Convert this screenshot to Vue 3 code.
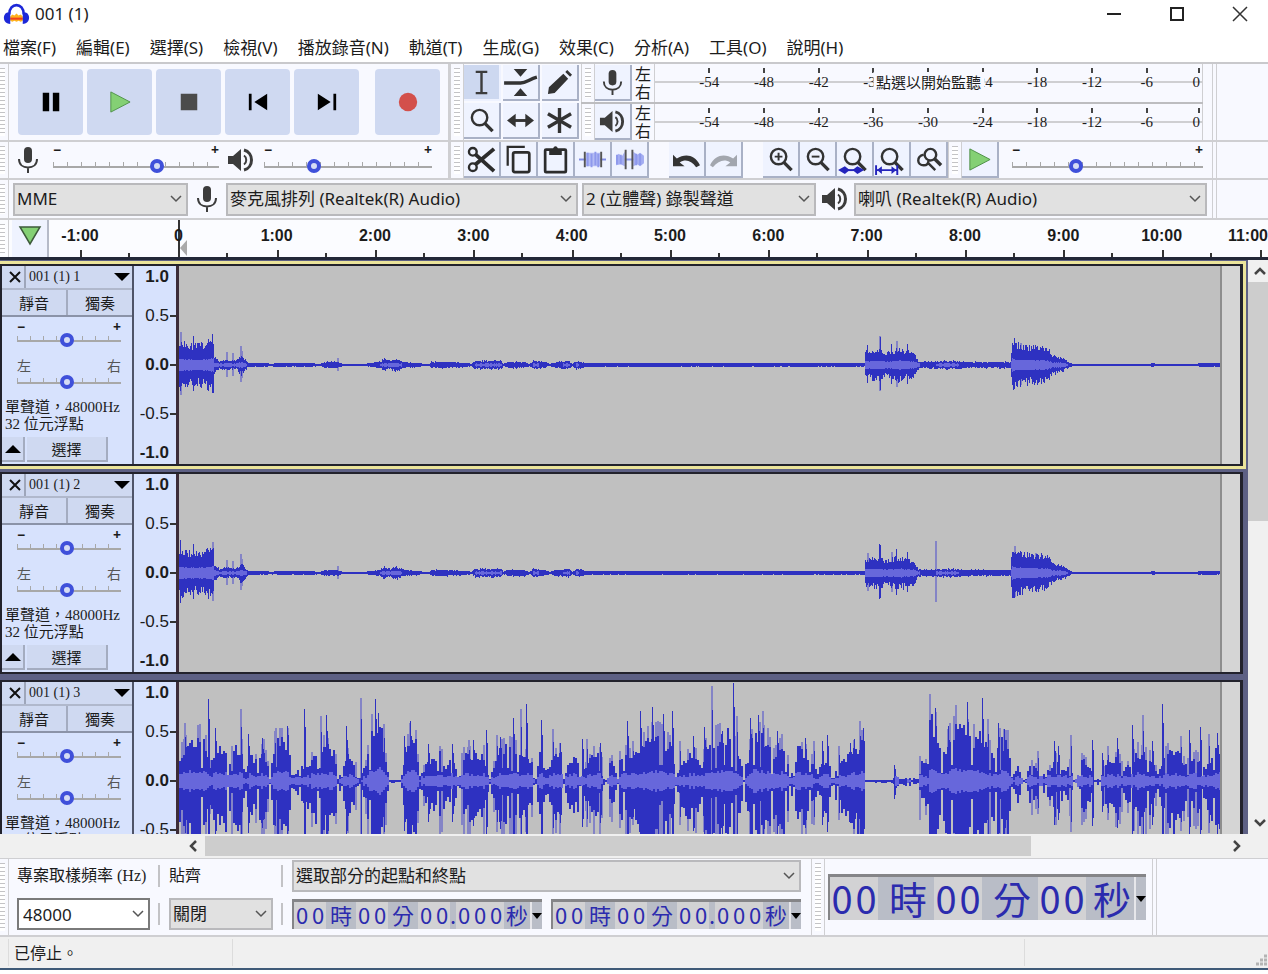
<!-- App.vue -->
<template>
  <div class="app" lang="zh-TW">
    <svg class="defs" aria-hidden="true">
      <symbol id="mic" viewBox="0 0 24 28">
        <rect x="8" y="1" width="8" height="16" rx="4" fill="#3c3c3c" />
        <path d="M3 13c0 5.500 4 8.500 9 8.500s9-3 9-8.500M12 21.500V27" fill="none" stroke="#3c3c3c" stroke-width="2" />
      </symbol>
      <symbol id="speaker" viewBox="0 0 28 26">
        <path d="M1 9h5l8-7v22l-8-7H1z" fill="#3c3c3c" />
        <path d="M17 8.500c3 2 3 7 0 9" fill="none" stroke="#3c3c3c" stroke-width="2" />
        <path d="M17 3c10 2.500 10 17.500 0 20" fill="none" stroke="#3c3c3c" stroke-width="3" />
      </symbol>
      <symbol id="caret" viewBox="0 0 12 8">
        <path d="M1 1l5 5 5-5" fill="none" stroke="#555" stroke-width="1.500" />
      </symbol>
      <symbol id="arrow" viewBox="0 0 12 8">
        <path d="M1 1l5 5 5-5" fill="none" stroke="#444" stroke-width="2.500" />
      </symbol>
      <symbol id="lens" viewBox="0 0 28 28">
        <circle cx="12" cy="11" r="8" fill="none" stroke="#333" stroke-width="2.500" />
        <path d="M17.500 17l8 8" stroke="#333" stroke-width="3.500" />
      </symbol>
    </svg>

    <!-- 標題列 -->
    <header class="titlebar">
      <svg class="logo" viewBox="0 0 24 24">
        <path d="M5 12c0-12 14-12 14 0" fill="none" stroke="#1d28d8" stroke-width="2.500" />
        <path d="M6 14l2-2 2 1 2-2 2 2 2-1 2 2v4l-2 1-2-1-2 1-2-1-2 1-2-1z" fill="#ffb21c" />
        <path d="M6 15h12v2H6z" fill="#f0421c" />
        <path d="M6 10v11c-7 0-8-9-3-11zM18 10v11c7 0 8-9 3-11z" fill="#1d28d8" />
      </svg>
      <span class="title">001 (1)</span>
      <div class="window-buttons">
        <button aria-label="最小化">
          <svg width="16" height="16"><path d="M1 8h14" stroke="#222" stroke-width="2" /></svg>
        </button>
        <button aria-label="最大化">
          <svg width="16" height="16"><path d="M2 2h12v12H2z" fill="none" stroke="#222" stroke-width="2" /></svg>
        </button>
        <button aria-label="關閉視窗">
          <svg width="16" height="16"><path d="M1 1l14 14M15 1L1 15" stroke="#333" stroke-width="1.500" /></svg>
        </button>
      </div>
    </header>
    <nav class="menubar">
      <button v-for="item in menus" :key="item">{{ item }}</button>
    </nav>

    <div class="toolbars">
      <!-- 播放控制、工具、音量表 -->
      <div class="row row-top">
        <div class="left-block">
          <i class="grab first"></i>
          <div class="transport">
            <button aria-label="暫停">
              <svg viewBox="0 0 24 24"><path d="M3 2h7v20H3zM14 2h7v20h-7z" fill="#000" /></svg>
            </button>
            <button aria-label="播放">
              <svg viewBox="0 0 24 24"><path d="M2 1l21 11L2 23z" fill="#84d074" stroke="#4b8f45" /></svg>
            </button>
            <button aria-label="停止">
              <svg viewBox="0 0 24 24"><path d="M3 3h18v18H3z" fill="#4b4b4b" /></svg>
            </button>
            <button aria-label="跳至開頭">
              <svg viewBox="0 0 24 24"><path d="M2 3h3v18H2zM22 3v18L8 12z" fill="#000" /></svg>
            </button>
            <button aria-label="跳至結尾">
              <svg viewBox="0 0 24 24"><path d="M19 3h3v18h-3zM2 3v18l14-9z" fill="#000" /></svg>
            </button>
            <button class="record" aria-label="錄音">
              <svg viewBox="0 0 24 24"><circle cx="12" cy="12" r="10" fill="#d3504b" /></svg>
            </button>
          </div>
        </div>
        <i class="grab"></i>
        <div class="tools">
          <button class="tool active" aria-label="選取工具">
            <svg viewBox="0 0 28 28"><path d="M8 3h12M8 25h12M14 3v22" stroke="#3c3c3c" stroke-width="2.500" /></svg>
          </button>
          <button class="tool" aria-label="波封工具">
            <svg class="wide" viewBox="0 0 34 28">
              <path d="M10 0h14l-7 8zM10 28h14l-7-8z" fill="#333" />
              <path d="M0 14.500h17c6 0 9-4 17-6" fill="none" stroke="#333" stroke-width="3.500" />
            </svg>
          </button>
          <button class="tool" aria-label="繪製工具">
            <svg viewBox="0 0 28 28"><path d="M2 26l1-7L18 5l5 5L9 25zM20 3l2-2 5 5-2 2z" fill="#333" /></svg>
          </button>
          <button class="tool" aria-label="縮放工具"><svg><use href="#lens" /></svg></button>
          <button class="tool" aria-label="時間移動工具">
            <svg viewBox="0 0 28 28">
              <path d="M5 14h18" stroke="#333" stroke-width="3" />
              <path d="M0 14l9-7v14zM28 14l-9-7v14z" fill="#333" />
            </svg>
          </button>
          <button class="tool" aria-label="多功能工具">
            <svg viewBox="0 0 28 28"><path d="M14 1v26M2 7l24 14M26 7L2 21" stroke="#333" stroke-width="3.500" /></svg>
          </button>
        </div>
        <div class="meters">
          <div v-for="m in meters" :key="m.icon" class="meter-row">
            <i class="grab"></i>
            <button class="tool" :aria-label="m.label"><svg><use :href="m.icon" /></svg></button>
            <div class="channels"><span>左</span><span>右</span></div>
            <div class="meter">
              <span v-for="db in decibels" :key="db" class="db">{{ db }}</span>
              <span class="db zero">0</span>
              <button v-if="m.hint" class="monitor">{{ m.hint }}</button>
            </div>
          </div>
        </div>
        <i class="row-end"></i>
      </div>

      <!-- 混音器、編輯 -->
      <div class="row row-mid">
        <div class="left-block">
          <i class="grab first"></i>
          <svg class="device-icon mic"><use href="#mic" /></svg>
          <div class="slider rec-level">
            <b>−</b><b>+</b>
            <input type="range" min="0" max="100" v-model="recLevel" aria-label="錄音音量" />
          </div>
          <svg class="device-icon out"><use href="#speaker" /></svg>
          <div class="slider play-level">
            <b>−</b><b>+</b>
            <input type="range" min="0" max="100" v-model="playLevel" aria-label="播放音量" />
          </div>
        </div>
        <i class="grab"></i>
        <button class="tool" aria-label="剪下">
          <svg viewBox="0 0 28 28" fill="none" stroke="#2c2c2c">
            <circle cx="5" cy="6" r="4" stroke-width="2.500" /><circle cx="5" cy="22" r="4" stroke-width="2.500" />
            <path d="M8 9l19 17M8 19L27 3" stroke-width="4" />
          </svg>
        </button>
        <button class="tool" aria-label="複製">
          <svg viewBox="0 0 28 30" fill="none" stroke="#2c2c2c" stroke-width="2.500">
            <path d="M2 22V1h19" /><rect x="8" y="7" width="18" height="22" rx="2" stroke-width="3" />
          </svg>
        </button>
        <button class="tool" aria-label="貼上">
          <svg viewBox="0 0 28 30">
            <rect x="2.500" y="4" width="23" height="25" rx="1" fill="none" stroke="#2c2c2c" stroke-width="3" />
            <path d="M7 4h4c1-5 5-5 6 0h4v6H7z" fill="#2c2c2c" />
          </svg>
        </button>
        <button class="tool" aria-label="修剪">
          <svg viewBox="0 0 28 28">
            <path d="M0 14h28" stroke="#7f8be6" stroke-width="2" />
            <path d="M7 7h15v14H7z" fill="#b4bcf4" />
            <path d="M9 7v14M13 8v14M17 6v14M20 8v14" fill="none" stroke="#8e99ec" stroke-width="2" />
            <path d="M6 6v16M23 6v16" stroke="#555" stroke-width="2" />
          </svg>
        </button>
        <button class="tool" aria-label="靜音化">
          <svg viewBox="0 0 28 28">
            <path d="M0 10l3-2 3 3 3-5v15l-4-2-5 1zM18 6l4 3 3-2 4 3v8l-4 3-3-2-4 2z" fill="#a3adf2" />
            <path d="M9 14h9M1 9v10M5 9v10M21 8v12M25 8v12" stroke="#8e99ec" stroke-width="2" />
            <path d="M10 4v20M17 4v20" stroke="#555" stroke-width="2" />
          </svg>
        </button>
        <div class="tool-group">
          <button class="tool" aria-label="復原">
            <svg viewBox="0 0 28 28"><path d="M0 9v12h12l-5-4c6-4 12-2 17 5l4-2C22 8 12 8 4 13z" fill="#333" /></svg>
          </button>
          <button class="tool" aria-label="重做">
            <svg viewBox="0 0 28 28"><path d="M28 9v12H16l5-4C15 13 9 15 3 22l-3-2C6 8 16 8 24 13z" fill="#a2a6ae" /></svg>
          </button>
        </div>
        <div class="tool-group">
          <button class="tool" aria-label="放大">
            <svg viewBox="0 0 28 28"><use href="#lens" /><path d="M8 11h8M12 7v8" stroke="#333" stroke-width="2" /></svg>
          </button>
          <button class="tool" aria-label="縮小">
            <svg viewBox="0 0 28 28"><use href="#lens" /><path d="M8 11h8" stroke="#333" stroke-width="2" /></svg>
          </button>
          <button class="tool" aria-label="縮放至選取範圍">
            <svg viewBox="0 0 28 28">
              <use href="#lens" />
              <path d="M1 25h18" stroke="#2424bc" stroke-width="2" />
              <path d="M-3 25l7-4v8zM9 25l-5-4v8zM12 25l5-4v8zM24 25l-7-4v8z" fill="#2424bc" />
            </svg>
          </button>
          <button class="tool" aria-label="符合視窗">
            <svg viewBox="0 0 28 28">
              <use href="#lens" />
              <path d="M-1 25h20M-2 20v10M20 20v10" stroke="#2424bc" stroke-width="2" />
              <path d="M-1 25l5-4v8zM19 25l-5-4v8z" fill="#2424bc" />
            </svg>
          </button>
          <button class="tool" aria-label="切換縮放">
            <svg viewBox="0 0 28 28" fill="none" stroke="#333">
              <circle cx="16" cy="9" r="6" stroke-width="2.500" />
              <path d="M20 13l7 7" stroke-width="3.500" />
              <path d="M9 9c-8 2-7 11 0 11 4 0 5-2 5-5M14 18l7 7" stroke-width="2.500" />
            </svg>
          </button>
        </div>
        <i class="grab"></i>
        <button class="tool" aria-label="以指定速度播放">
          <svg viewBox="0 0 28 28"><path d="M4 3l21 11L4 25z" fill="#84d074" stroke="#4b8f45" /></svg>
        </button>
        <div class="slider speed">
          <b>−</b><b>+</b>
          <input type="range" min="0" max="100" v-model="speed" aria-label="播放速度" />
        </div>
        <i class="row-end"></i>
      </div>

      <!-- 裝置 -->
      <div class="row row-device">
        <i class="grab first"></i>
        <div class="select host">
          <select aria-label="音訊主機"><option>MME</option></select>
          <svg class="caret"><use href="#caret" /></svg>
        </div>
        <svg class="device-icon mic"><use href="#mic" /></svg>
        <div class="select input-device">
          <select aria-label="錄製裝置"><option>麥克風排列 (Realtek(R) Audio)</option></select>
          <svg class="caret"><use href="#caret" /></svg>
        </div>
        <div class="select input-channels">
          <select aria-label="錄製聲道"><option>2 (立體聲) 錄製聲道</option></select>
          <svg class="caret"><use href="#caret" /></svg>
        </div>
        <svg class="device-icon"><use href="#speaker" /></svg>
        <div class="select output-device">
          <select aria-label="播放裝置"><option>喇叭 (Realtek(R) Audio)</option></select>
          <svg class="caret"><use href="#caret" /></svg>
        </div>
        <i class="row-end"></i>
      </div>
    </div>

    <!-- 時間軸 -->
    <div class="timeline">
      <i class="grab first"></i>
      <button class="pin" aria-label="釘選播放頭">
        <svg viewBox="0 0 22 20"><path d="M1 1h20L11 18z" fill="#84d074" stroke="#3d5a3a" stroke-width="1.500" /></svg>
      </button>
      <div class="ruler">
        <div v-for="t in times" :key="t" class="minute" :class="{ origin: t === '0' }">
          <span>{{ t }}</span>
        </div>
        <div class="minute last"><span>11:00</span></div>
      </div>
    </div>

    <!-- 軌道 -->
    <main class="workspace">
      <div class="tracks">
        <section v-for="(track, i) in tracks" :key="track.name" class="track" :class="{ focused: i === 0 }">
          <div class="panel">
            <div class="panel-title">
              <button class="close" aria-label="關閉軌道">
                <svg width="12" height="12"><path d="M1 1l10 10M11 1L1 11" stroke="#111" stroke-width="2" /></svg>
              </button>
              <button class="name">{{ track.name }}<i class="down"></i></button>
            </div>
            <div class="mute-solo">
              <button>靜音</button>
              <button>獨奏</button>
            </div>
            <div class="slider gain">
              <b>−</b><b>+</b>
              <input type="range" min="0" max="100" v-model="track.gain" aria-label="增益" />
            </div>
            <div class="slider gain pan">
              <b>左</b><b>右</b>
              <input type="range" min="0" max="100" v-model="track.pan" aria-label="聲像" />
            </div>
            <p class="info">單聲道，48000Hz<br />32 位元浮點</p>
            <div class="panel-foot">
              <button class="collapse" aria-label="收合"><i class="up"></i></button>
              <button class="choose">選擇</button>
            </div>
          </div>
          <div class="scale">
            <span v-for="s in scale" :key="s">{{ s }}</span>
          </div>
          <div class="wave">
            <svg viewBox="0 0 1041 198" preserveAspectRatio="none">
              <path :d="track.wave.soft" stroke="#8484c6" />
              <path :d="track.wave.peak" stroke="#2e31c1" />
              <path :d="track.wave.rms" stroke="#6767db" />
            </svg>
          </div>
          <div class="after-clip"></div>
        </section>
      </div>
      <div class="vscroll">
        <button aria-label="向上捲動"><svg class="up-arrow"><use href="#arrow" /></svg></button>
        <div class="lane"><i class="thumb"></i></div>
        <button aria-label="向下捲動"><svg><use href="#arrow" /></svg></button>
      </div>
    </main>
    <div class="hscroll">
      <button aria-label="向左捲動"><svg class="left-arrow"><use href="#arrow" /></svg></button>
      <div class="lane"><i class="thumb"></i></div>
      <button aria-label="向右捲動"><svg class="right-arrow"><use href="#arrow" /></svg></button>
    </div>

    <!-- 選取範圍 -->
    <div class="selection-bar">
      <i class="grab first"></i>
      <div class="selection">
        <div class="cell sep"><label for="rate">專案取樣頻率 (Hz)</label></div>
        <div class="cell sep"><label for="snap">貼齊</label></div>
        <div class="select range-mode">
          <select aria-label="選取模式"><option>選取部分的起點和終點</option></select>
          <svg class="caret"><use href="#caret" /></svg>
        </div>
        <div class="cell sep">
          <div class="select rate">
            <input id="rate" type="text" v-model="rate" />
            <svg class="caret"><use href="#caret" /></svg>
          </div>
        </div>
        <div class="cell sep">
          <div class="select snap">
            <select id="snap"><option>關閉</option></select>
            <svg class="caret"><use href="#caret" /></svg>
          </div>
        </div>
        <div v-for="n in 2" :key="n" class="time">
          <template v-for="(part, k) in selectionTime" :key="k">
            <span v-for="(ch, c) in part.text" :key="c" :class="part.kind">{{ ch }}</span>
          </template>
          <button aria-label="時間格式"><i class="down"></i></button>
        </div>
      </div>
      <i class="grab"></i>
      <div class="time big">
        <template v-for="(part, k) in audioTime" :key="k">
          <span v-for="(ch, c) in part.text" :key="c" :class="part.kind">{{ ch }}</span>
        </template>
        <button aria-label="時間格式"><i class="down"></i></button>
      </div>
      <i class="row-end"></i>
    </div>

    <footer class="status">
      <span class="state">已停止。</span>
      <span class="message"></span>
      <span class="extra"></span>
      <svg class="grip" width="14" height="14">
        <path d="M10 2h3M6 6h3M10 6h3M2 10h3M6 10h3M10 10h3" stroke="#b4b4b4" stroke-width="3" />
      </svg>
    </footer>
  </div>
</template>

<script setup>
import { ref, reactive } from 'vue'

const menus = [
  '檔案(F)', '編輯(E)', '選擇(S)', '檢視(V)', '播放錄音(N)', '軌道(T)',
  '生成(G)', '效果(C)', '分析(A)', '工具(O)', '說明(H)'
]
const decibels = ['-54', '-48', '-42', '-36', '-30', '-24', '-18', '-12', '-6']
const meters = [
  { icon: '#mic', label: '錄音音量表', hint: '點選以開始監聽' },
  { icon: '#speaker', label: '播放音量表', hint: '' }
]
const times = ['-1:00', '0', '1:00', '2:00', '3:00', '4:00', '5:00', '6:00', '7:00', '8:00', '9:00', '10:00']
const scale = ['1.0', '0.5', '0.0', '-0.5', '-1.0']

const recLevel = ref(64)
const playLevel = ref(28)
const speed = ref(32)
const rate = ref('48000')

const selectionTime = [
  { kind: 'digit', text: '00' }, { kind: 'unit', text: '時' },
  { kind: 'digit', text: '00' }, { kind: 'unit', text: '分' },
  { kind: 'digit', text: '00' }, { kind: 'dot', text: '.' },
  { kind: 'digit', text: '000' }, { kind: 'unit last', text: '秒' }
]
const audioTime = selectionTime.filter((p, i) => i < 5 || i === 7)

// 波形：[x, 高度] 包絡與尖峰，中線為 99
const CENTER = 99
const LENGTH = 1041

const quietBase = [
  [0, 24], [5, 21], [15, 18], [25, 20], [34, 24], [35, 8], [40, 4], [46, 5], [56, 4], [62, 9], [66, 5], [69, 2],
  [88, 2], [90, 1], [100, 2], [130, 2], [140, 1], [145, 3], [158, 3], [164, 1], [186, 1], [190, 2], [200, 3],
  [205, 6], [210, 4], [217, 6], [224, 3], [240, 2], [244, 1], [250, 1], [252, 3], [270, 3], [288, 2], [292, 1],
  [296, 4], [322, 4], [324, 1], [328, 3], [345, 3], [350, 1], [354, 4], [366, 3], [370, 1], [376, 3], [390, 4],
  [393, 1], [397, 4], [403, 3], [406, 2], [685, 2], [686, 13], [695, 14], [701, 14], [706, 11], [715, 14],
  [721, 15], [726, 13], [734, 12], [739, 4], [742, 3], [770, 4], [790, 3], [831, 3], [833, 24], [836, 20],
  [845, 18], [868, 16], [873, 9], [884, 6], [889, 3], [893, 1], [970, 1], [973, 2], [977, 1], [1018, 1],
  [1020, 2], [1041, 2]
]
const quietSpikes = [
  [1, 33], [14, 29], [33, 31], [47, 13], [53, 12], [61, 19], [62, 14], [158, 7], [688, 20], [700, 29], [701, 28],
  [712, 21], [717, 24], [728, 21], [835, 27], [841, 22], [850, 20], [856, 20]
]
const loudBase = [
  [0, 25], [10, 38], [24, 42], [30, 15], [36, 30], [46, 32], [48, 12], [54, 32], [62, 30], [65, 5], [70, 25],
  [77, 18], [84, 30], [90, 6], [95, 38], [108, 38], [112, 6], [120, 12], [130, 18], [141, 34], [155, 28], [158, 2],
  [167, 25], [177, 12], [180, 3], [186, 15], [192, 48], [200, 60], [206, 20], [209, 1], [221, 1], [224, 18],
  [231, 45], [237, 35], [239, 3], [246, 15], [261, 26], [266, 12], [273, 22], [278, 4], [283, 24], [304, 26],
  [309, 3], [321, 30], [331, 32], [351, 20], [356, 2], [360, 25], [366, 10], [374, 22], [381, 28], [384, 2],
  [391, 22], [398, 20], [400, 5], [414, 25], [421, 24], [424, 3], [426, 1], [431, 20], [435, 14], [437, 1],
  [441, 28], [454, 22], [461, 32], [471, 42], [481, 42], [493, 30], [495, 2], [503, 18], [514, 28], [521, 12],
  [528, 38], [536, 40], [551, 45], [561, 20], [564, 1], [566, 15], [574, 45], [588, 38], [593, 22], [604, 36],
  [611, 6], [618, 30], [629, 25], [638, 8], [646, 22], [653, 8], [661, 18], [669, 25], [684, 38], [686, 1],
  [713, 1], [716, 6], [721, 2], [728, 4], [738, 2], [739, 18], [748, 15], [750, 62], [758, 45], [761, 20],
  [769, 40], [778, 52], [793, 40], [798, 45], [813, 25], [820, 38], [829, 36], [831, 3], [838, 14], [844, 1],
  [851, 16], [864, 7], [871, 12], [879, 25], [883, 8], [890, 16], [894, 1], [902, 20], [911, 14], [914, 1],
  [920, 3], [928, 18], [939, 22], [944, 9], [958, 28], [970, 22], [978, 8], [986, 25], [994, 33], [1006, 15],
  [1016, 22], [1026, 14], [1038, 38], [1041, 30]
]
const loudSpikes = [
  [5, 58], [29, 82], [36, 53], [61, 72], [69, 47], [83, 43], [95, 50], [108, 55], [125, 72], [141, 65], [147, 66],
  [167, 55], [181, 83], [196, 82], [199, 68], [204, 57], [225, 45], [231, 60], [236, 50], [249, 37], [273, 37],
  [289, 41], [294, 41], [307, 51], [317, 46], [321, 44], [334, 63], [341, 72], [347, 77], [362, 61], [373, 52],
  [381, 38], [403, 42], [407, 42], [421, 38], [448, 60], [453, 40], [461, 70], [473, 74], [478, 60], [484, 67],
  [493, 70], [500, 40], [514, 45], [525, 54], [532, 95], [543, 50], [554, 98], [557, 65], [571, 63], [579, 66],
  [583, 70], [598, 50], [626, 43], [634, 40], [643, 40], [648, 46], [659, 35], [671, 38], [675, 42], [680, 60],
  [684, 53], [715, 16], [750, 68], [756, 73], [769, 55], [776, 76], [788, 79], [803, 83], [808, 62], [819, 58],
  [825, 52], [858, 30], [875, 40], [879, 35], [891, 46], [913, 41], [923, 28], [928, 35], [938, 43], [953, 56],
  [963, 66], [973, 40], [983, 77], [1001, 45], [1010, 51], [1021, 54], [1029, 47], [1038, 48]
]

const makeRandom = (seed) => () => {
  seed = (seed * 16807) % 2147483647
  return seed / 2147483647
}

const envelope = (points, x) => {
  const i = points.findIndex((p) => p[0] > x)
  if (i <= 0) return points[points.length - 1][1]
  const [x0, y0] = points[i - 1]
  const [x1, y1] = points[i]
  return y0 + ((y1 - y0) * (x - x0)) / (x1 - x0)
}

const bar = (x, up, down) => `M${x + 0.5} ${CENTER - up}V${CENTER + down}`

const buildWave = (base, spikes, seed, loud) => {
  const random = makeRandom(seed)
  const step = loud ? 2 : 1
  let peak = ''
  let soft = ''
  let rms = ''
  for (let x = 0; x < LENGTH; x += step) {
    const e = envelope(base, x)
    const jitter = e < 2.5 ? 1 : 0.8 + random() * 0.4
    const cut = loud && random() < 0.16 ? 0.35 : 1
    const up = Math.max(1, Math.round(e * jitter * cut))
    const down = Math.min(CENTER, Math.max(1, Math.round(e * (loud ? 1.4 : 1) * (0.7 + random() * 0.5) * cut)))
    const faint = loud && e > 10 && random() < 0.3
    const r = e > 3.5 ? Math.round(e * (loud ? 0.18 : 0.25) + random() * (loud ? 4 : 1)) : 0
    for (let k = x; k < Math.min(x + step, LENGTH); k++) {
      peak += bar(k, up, down)
      if (faint) soft += bar(k, Math.min(88, e * 1.4), Math.min(96, e * 2.2))
      if (r) rms += bar(k, r, r)
    }
  }
  spikes.forEach(([x, h], i) => {
    const down = Math.min(CENTER, Math.round(h * (loud ? 1.1 : 0.9)))
    if (i % 3 === 0 || (!loud && h < 20)) soft += bar(x, h, down) + bar(x + 1, h, down)
    else peak += bar(x, h, down)
    if (loud) peak += bar(x + 1, Math.round(h * 0.75), Math.round(h * 0.9))
  })
  return { peak, soft, rms }
}

const tracks = reactive([
  { name: '001 (1) 1', gain: 48, pan: 48, wave: buildWave(quietBase, quietSpikes, 11, false) },
  { name: '001 (1) 2', gain: 48, pan: 48, wave: buildWave(quietBase, [[756, 32], ...quietSpikes], 23, false) },
  { name: '001 (1) 3', gain: 48, pan: 48, wave: buildWave(loudBase, loudSpikes, 37, true) }
])
</script>

<style>
body {
  margin: 0;
  background: #fff;
}
</style>

<style scoped>
* {
  box-sizing: border-box;
}
.app {
  overflow: hidden;
  color: #1c1c1c;
  font: 17px/24px "Noto Sans", "Noto Sans CJK TC", sans-serif;
  border-bottom: 2px solid #3f5a78;
}
.defs {
  display: none;
}
button {
  padding: 0;
  border: none;
  background: none;
  color: inherit;
  font: inherit;
  display: flex;
  align-items: center;
  justify-content: center;
}
svg {
  flex: none;
  overflow: visible;
}

/* 標題與選單 */
.titlebar {
  display: flex;
  align-items: center;
  height: 28px;
  padding-left: 4px;
}
.logo {
  width: 25px;
  height: 25px;
}
.title {
  margin-left: 6px;
}
.window-buttons {
  display: flex;
  gap: 7px;
  margin-left: auto;
}
.window-buttons button {
  width: 56px;
  height: 28px;
}
.menubar {
  display: flex;
  gap: 20px;
  height: 34px;
  padding: 4px 3px 0;
}
.menubar button {
  height: 32px;
  white-space: nowrap;
}

/* 工具列 */
.toolbars {
  border-top: 2px solid #c9c9cc;
  background: #f8f9ff;
}
.row {
  display: flex;
  align-items: center;
  border-bottom: 2px solid #cfcfd2;
}
.row-top {
  height: 78px;
}
.row-mid {
  height: 38px;
}
.row-device {
  height: 40px;
}
.grab {
  flex: none;
  align-self: stretch;
  width: 14px;
  border: solid #cfcfd2;
  border-width: 0 1px;
  background: repeating-linear-gradient(#c3c3c6 0 1px, transparent 1px 4px) content-box #fff;
  padding: 4px 3px;
}
.grab.first {
  width: 9px;
  border-left: none;
  padding-left: 0;
}
.row-end {
  flex: none;
  align-self: stretch;
  width: 5px;
  border: solid #cfcfd2;
  border-width: 0 1px;
}
.row-top .row-end,
.row-mid .row-end {
  margin-left: 9px;
}
.left-block {
  display: flex;
  align-items: center;
  align-self: stretch;
  flex: none;
  width: 450px;
  border-right: 2px solid #cfcfd2;
}
.transport {
  display: flex;
  gap: 4px;
  padding-left: 9px;
}
.transport button {
  width: 65px;
  height: 66px;
  border-radius: 4px;
  background: #cfd9f1;
}
.transport .record {
  margin-left: 12px;
}
.transport svg {
  width: 22px;
  height: 22px;
}
.tools {
  display: grid;
  grid-template-columns: repeat(3, 39px);
  grid-template-rows: repeat(2, 38px);
  align-items: center;
}
.tool {
  flex: none;
  width: 37px;
  height: 36px;
  background: #eff3ff;
  border: solid #a9b1c6;
  border-width: 0 2px 2px 0;
}
.tool.active {
  background: #cdd8f0;
  border-color: #eef2ff;
}
.tool svg {
  width: 27px;
  height: 27px;
}
.tool .wide {
  width: 33px;
}
.tool-group {
  display: flex;
  margin-left: 20px;
}
.meters {
  width: 622px;
}
.meter-row {
  display: flex;
  align-items: center;
  height: 38px;
}
.meter-row + .meter-row {
  border-top: 2px solid #bdbdc0;
}
.channels {
  display: flex;
  flex-direction: column;
  width: 22px;
  font-size: 16px;
  line-height: 18px;
  text-align: center;
}
.meter {
  position: relative;
  display: flex;
  flex: 1;
  align-self: stretch;
  padding: 2px 2px 0 27px;
  border: solid #cfcfd2;
  border-width: 0 1px;
  background: linear-gradient(#cfcfd2, #cfcfd2) 0 17px / 100% 2px no-repeat;
  font: 15px/32px "Liberation Serif", serif;
}
.db {
  flex: 1;
  text-align: center;
  background: linear-gradient(#444, #444) 50% 2px / 2px 5px no-repeat;
}
.db.zero {
  flex: 0 0 26px;
  text-align: right;
  background-position: 100% 2px;
}
.monitor {
  position: absolute;
  left: 50%;
  top: 8px;
  transform: translateX(-50%);
  height: 20px;
  padding: 0 3px;
  background: #f8f9ff;
  font: 15px/20px "Noto Sans CJK TC", sans-serif;
  white-space: nowrap;
}
.device-icon {
  width: 28px;
  height: 26px;
  margin: 0 5px;
}
.device-icon.mic {
  width: 24px;
  height: 28px;
  margin: 0 7px;
}
.device-icon.out {
  margin: 0 9px 0 8px;
}

/* 滑桿 */
.slider {
  display: grid;
  grid-template-columns: 1fr 1fr;
  flex: none;
  height: 32px;
  font-size: 14px;
  line-height: 12px;
}
.slider b {
  height: 12px;
}
.slider b + b {
  text-align: right;
}
.slider input {
  grid-column: 1 / 3;
  appearance: none;
  width: 100%;
  height: 14px;
  margin: 0;
  background:
    linear-gradient(#a8a8a8, #a8a8a8) 0 7px / 100% 2px no-repeat,
    repeating-linear-gradient(to right, #a8a8a8 0 1px, transparent 1px 14px) 0 3px / 100% 4px no-repeat;
}
.slider input::-webkit-slider-thumb {
  appearance: none;
  width: 14px;
  height: 14px;
  border: 4px solid #3f50da;
  border-radius: 50%;
  background: #d5dcf4;
}
.rec-level {
  width: 166px;
  margin-left: 6px;
}
.play-level {
  width: 168px;
}
.speed {
  width: 191px;
  margin-left: 13px;
}

/* 下拉選單 */
.select {
  position: relative;
  flex: none;
  height: 33px;
}
.select select,
.select input {
  appearance: none;
  width: 100%;
  height: 100%;
  margin: 0;
  padding: 0 24px 0 2px;
  border: 2px solid #b9b9bc;
  border-radius: 0;
  background: #e1e1e1;
  color: inherit;
  font: inherit;
}
.select input {
  padding-left: 4px;
  background: #fff;
  border-color: #7a7a7a;
}
.caret {
  position: absolute;
  right: 6px;
  top: 50%;
  width: 12px;
  height: 8px;
  margin-top: -4px;
  pointer-events: none;
}
.host {
  width: 175px;
  margin-left: 4px;
}
.input-device {
  width: 352px;
}
.input-channels {
  width: 234px;
  margin-left: 4px;
}
.output-device {
  width: 353px;
  margin-right: 5px;
}

/* 時間軸 */
.timeline {
  display: flex;
  height: 40px;
  background: #fbfcff;
  border-bottom: 3px solid #232838;
}
.pin {
  flex: none;
  width: 37px;
  margin-left: 3px;
  margin-right: 31px;
  background: #eff3ff;
  border-right: 2px solid #b5bac8;
}
.pin svg {
  width: 22px;
  height: 20px;
  margin-bottom: 5px;
}
.ruler {
  display: flex;
  flex: 1;
  min-width: 0;
  font: bold 16px/32px "Liberation Sans", sans-serif;
}
.minute {
  position: relative;
  flex: 1 1 0;
  min-width: 0;
  background:
    linear-gradient(#333, #333) 0 100% / 2px 7px no-repeat,
    linear-gradient(#333, #333) 50% 100% / 2px 4px no-repeat;
}
.minute span {
  display: inline-block;
  transform: translateX(-50%);
}
.minute.last {
  display: flex;
  flex: 0 0 8px;
  justify-content: flex-end;
  background-size: 2px 7px, 0 0;
}
.minute.last span {
  transform: none;
}
.minute.origin {
  background-size: 2px 100%, 2px 4px;
}
.minute.origin::after {
  content: "";
  position: absolute;
  left: 2px;
  bottom: 1px;
  border: solid transparent;
  border-width: 8px 7px 8px 0;
  border-right-color: #aaa;
}

/* 軌道 */
.workspace {
  display: flex;
  height: calc(100vh - 400px);
  overflow: hidden;
  background: #5d6084;
}
.tracks {
  flex: 1;
  min-width: 0;
  padding-top: 4px;
}
.track {
  display: flex;
  height: 202px;
  margin: 0 5px 6px 0;
  border: 2px solid #22222c;
  border-right-width: 3px;
}
.track.focused {
  box-shadow: 0 0 0 3px #ebe49b;
}
.panel {
  flex: none;
  width: 132px;
  background: #d7e2fd;
  border-right: 2px solid #4f5468;
  font-size: 15px;
}
.panel-title,
.mute-solo {
  display: flex;
  background: #cfd9f1;
  border-bottom: 2px solid #8b93a8;
}
.panel-title {
  height: 24px;
  border-bottom-color: #b0b8cc;
}
.close {
  width: 24px;
  padding-left: 3px;
  border-right: 2px solid #9ea6ba;
}
.panel-title .name {
  flex: 1;
  justify-content: space-between;
  padding: 0 2px 0 3px;
  font: 14px/20px "Liberation Serif", serif;
}
.down,
.up {
  border: solid transparent;
  border-width: 8px 8px 0;
  border-top-color: #000;
}
.up {
  border-width: 0 8px 8px;
  border-bottom-color: #000;
}
.mute-solo {
  height: 27px;
}
.mute-solo button {
  flex: 1;
}
.mute-solo button + button {
  border-left: 2px solid #a4acc0;
}
.gain {
  align-content: start;
  width: 104px;
  height: 42px;
  margin-left: 15px;
  padding-top: 4px;
}
.gain input {
  background:
    linear-gradient(#a8a8a8, #a8a8a8) 0 7px / 100% 2px no-repeat,
    repeating-linear-gradient(to right, #a8a8a8 0 1px, transparent 1px 13px) 0 3px / 100% 4px no-repeat;
}
.gain.pan {
  height: 40px;
  padding-top: 0;
  color: #555;
}
.pan b {
  height: 16px;
  font-weight: normal;
  line-height: 14px;
}
.info {
  margin: 0 0 0 3px;
  font: 15px/17px "Liberation Serif", "Noto Sans CJK TC", serif;
  white-space: nowrap;
}
.panel-foot {
  display: flex;
  gap: 2px;
  height: 25px;
  margin-top: 4px;
}
.panel-foot button {
  background: #cfd9f1;
  border: solid #a4acc0;
  border-width: 0 2px 2px 0;
}
.collapse {
  width: 23px;
}
.choose {
  width: 81px;
}
.scale {
  display: grid;
  grid-template-rows: 39px 49px 49px 39px 20px;
  flex: none;
  width: 45px;
  padding: 1px 0 0;
  background: #d7e2fd;
  border-right: 3px solid #3c2c38;
  font: 17px/20px "Liberation Sans", sans-serif;
  text-align: right;
}
.scale span {
  height: 20px;
  padding-right: 7px;
}
.scale span:nth-child(odd) {
  font-weight: bold;
}
.scale span:nth-child(2),
.scale span:nth-child(3),
.scale span:nth-child(4) {
  background: linear-gradient(#333, #333) 100% 9px / 6px 2px no-repeat;
}
.wave {
  flex: 1;
  min-width: 0;
  background: #c0c0c0;
}
.wave svg {
  display: block;
  width: 100%;
  height: 198px;
  overflow: hidden;
  shape-rendering: crispEdges;
}
.after-clip {
  flex: none;
  width: 20px;
  background: #d5d5d5;
  border-left: 2px solid #8e8e8e;
}

/* 捲軸 */
.vscroll {
  display: flex;
  flex-direction: column;
  flex: none;
  width: 20px;
  background: #f0f0f0;
}
.vscroll button {
  height: 22px;
  padding-left: 3px;
}
.vscroll svg,
.hscroll svg {
  width: 12px;
  height: 8px;
}
.vscroll .up-arrow {
  transform: rotate(180deg);
}
.lane {
  flex: 1;
}
.thumb {
  display: block;
  background: #cdcdcd;
}
.vscroll .thumb {
  width: 100%;
  height: 45%;
}
.hscroll {
  display: flex;
  height: 24px;
  padding: 2px 19px 2px 181px;
  background: #f0f0f0;
}
.hscroll button {
  width: 24px;
}
.hscroll .left-arrow {
  transform: rotate(90deg);
}
.hscroll .right-arrow {
  transform: rotate(-90deg);
}
.hscroll .thumb {
  width: 81%;
  height: 100%;
}

/* 選取範圍列 */
.selection-bar {
  display: flex;
  height: 79px;
  background: #f8f9ff;
  border: solid #cfcfd2;
  border-width: 1px 0 2px;
}
.selection {
  display: grid;
  grid-template-columns: 143px 114px 250px 250px;
  grid-template-rows: 34px 32px;
  column-gap: 9px;
  row-gap: 5px;
  align-items: center;
  flex: none;
  width: 802px;
  padding-left: 8px;
}
.selection .select {
  height: 32px;
}
.cell {
  font: 16px/24px "Liberation Serif", "Noto Sans CJK TC", serif;
}
.cell.sep {
  background: linear-gradient(#c3c3c6, #c3c3c6) 100% 50% / 2px 22px no-repeat;
}
.cell .select {
  font: 17px/24px "Noto Sans", "Noto Sans CJK TC", sans-serif;
}
.range-mode {
  grid-column: 3 / 5;
}
.rate {
  width: 133px;
}
.snap {
  width: 104px;
}
.time {
  display: flex;
  height: 30px;
  border: solid #858588;
  border-width: 3px 0 0 2px;
  background: #b9bdc7;
  color: #2b2bae;
  font: 22px/25px "Noto Sans CJK TC", sans-serif;
  text-align: center;
}
.time span {
  flex: none;
}
.time .digit {
  width: 16px;
  background: #d2d2d4;
}
.time .unit {
  width: 30px;
}
.time .last {
  width: 26px;
}
.time .dot {
  width: 6px;
}
.time button {
  flex: 1;
  border-left: 2px solid #e6e6ea;
}
.time .down {
  border-width: 6px 5px 0;
}
.time.big {
  align-self: center;
  width: 318px;
  height: 46px;
  margin: 0 6px 0 3px;
  font-size: 38px;
  line-height: 42px;
}
.big .digit {
  width: 24px;
}
.big .unit {
  width: 56px;
  padding-left: 4px;
}
.big .last {
  width: 48px;
}

/* 狀態列 */
.status {
  display: flex;
  align-items: center;
  height: 31px;
  padding-left: 8px;
  background: #f0f0f0;
  font-size: 16px;
}
.status span {
  height: 27px;
  line-height: 28px;
  border-left: 1px solid #dcdcdc;
}
.state {
  width: 224px;
  padding-left: 5px;
}
.message {
  flex: 1;
}
.extra {
  width: 230px;
}
.grip {
  align-self: flex-end;
}
</style>
